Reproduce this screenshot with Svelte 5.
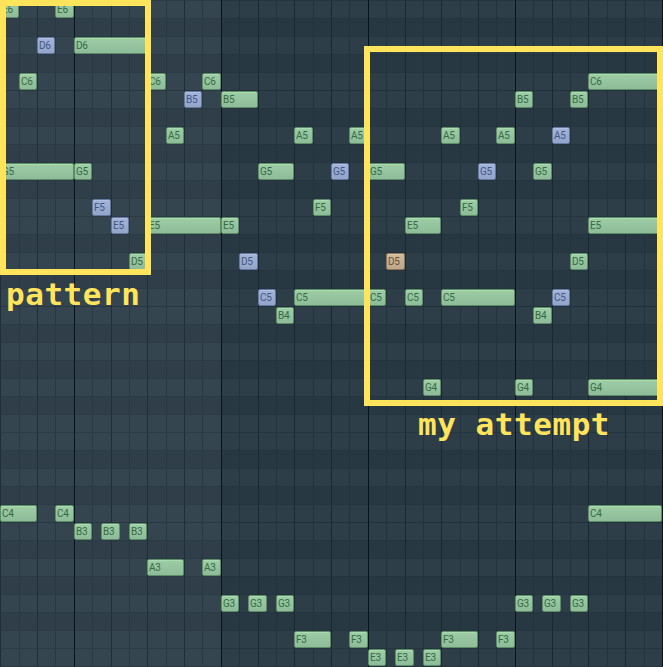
<script>
  const cols = [0, 19, 37, 55, 74, 92, 111, 129, 147, 166, 184, 202, 221, 239, 258, 276, 294, 313, 331, 349, 368, 386, 405, 423, 441, 460, 478, 496, 515, 533, 552, 570, 588, 607, 625, 644, 662, 680];
  const names = ['E', 'D#', 'D', 'C#', 'C', 'B', 'A#', 'A', 'G#', 'G', 'F#', 'F'];
  const rows = Array.from({ length: 38 }, (_, i) => names[i % 12]);
  const steps = cols.slice(0, 37).map((x, i) => ({
    w: cols[i + 1] - x,
    kind: i % 8 === 4 ? 'bar' : i % 2 === 0 ? 'beat' : 'step',
    dim: i >= 12
  }));

  // [label, left, right, colour]
  const data = [
    ['E6', 0, 19], ['E6', 55, 74], ['D6', 37, 55, 'blue'], ['D6', 74, 148],
    ['C6', 19, 37], ['C6', 147, 166], ['C6', 202, 221], ['C6', 588, 662],
    ['B5', 184, 202, 'blue'], ['B5', 221, 258], ['B5', 515, 533], ['B5', 570, 588],
    ['A5', 166, 184], ['A5', 294, 313], ['A5', 349, 368], ['A5', 441, 460], ['A5', 496, 515], ['A5', 552, 570, 'blue'],
    ['G5', 0, 74], ['G5', 74, 92], ['G5', 258, 294], ['G5', 331, 349, 'blue'], ['G5', 368, 405], ['G5', 478, 496, 'blue'], ['G5', 533, 552],
    ['F5', 92, 111, 'blue'], ['F5', 313, 331], ['F5', 460, 478],
    ['E5', 111, 129, 'blue'], ['E5', 147, 221], ['E5', 221, 239], ['E5', 405, 441], ['E5', 588, 662],
    ['D5', 129, 147], ['D5', 239, 258, 'blue'], ['D5', 386, 405, 'tan'], ['D5', 570, 588],
    ['C5', 258, 276, 'blue'], ['C5', 294, 368], ['C5', 368, 386], ['C5', 405, 423], ['C5', 441, 515], ['C5', 552, 570, 'blue'],
    ['B4', 276, 294], ['B4', 533, 552],
    ['G4', 423, 441], ['G4', 515, 533], ['G4', 588, 662],
    ['C4', 0, 37], ['C4', 55, 74], ['C4', 588, 662],
    ['B3', 74, 92], ['B3', 101, 120], ['B3', 129, 147],
    ['A3', 147, 184], ['A3', 202, 221],
    ['G3', 221, 239], ['G3', 248, 267], ['G3', 276, 294], ['G3', 515, 533], ['G3', 542, 561], ['G3', 570, 588],
    ['F3', 294, 331], ['F3', 349, 368], ['F3', 441, 478], ['F3', 496, 515],
    ['E3', 368, 386], ['E3', 395, 414], ['E3', 423, 441]
  ];
  const semis = { C: 0, D: 2, E: 4, F: 5, G: 7, A: 9, B: 11 };
  const notes = data.map(([label, left, right, color = 'green']) => ({
    label, left, color,
    width: right - left,
    top: (76 - (semis[label[0]] + 12 * +label[1])) * 18 + 1
  }));
</script>

<main class="roll">
  <div class="lanes">
    {#each rows as r}
      <div class="lane" class:sharp={r.length > 1} class:octave={r === 'B'}></div>
    {/each}
  </div>
  <div class="steps">
    {#each steps as s}
      <div class="col {s.kind}" class:dim={s.dim} style:width="{s.w}px"></div>
    {/each}
  </div>
  {#each notes as n}
    <div class="note {n.color}" style:left="{n.left}px" style:top="{n.top}px" style:width="{n.width}px">{n.label}</div>
  {/each}
  <div class="frame pattern"></div>
  <div class="frame attempt"></div>
  <div class="caption c1">pattern</div>
  <div class="caption c2">my attempt</div>
</main>

<style>
  :global(body) { margin: 0; background: #34444e; }
  .roll { position: relative; width: 663px; height: 667px; overflow: hidden; }
  .lanes { display: flex; flex-direction: column; }
  .lane { flex: 0 0 18px; box-sizing: border-box; background: #35454f; border-top: 1px solid #2b3a44; }
  .lane.sharp { background: #2f3e48; }
  .lane.octave { border-top-color: #283741; }
  .steps { position: absolute; inset: 0; display: flex; }
  .col { flex: none; box-sizing: border-box; border-left: 1px solid #293842; }
  .beat { border-left-color: #1f2e38; }
  .bar { border-left-color: #07141d; }
  .dim { background: rgba(2, 18, 30, 0.13); background-clip: padding-box; }
  .dim.step { border-left-color: #23323c; }
  .dim.beat { border-left-color: #192832; }
  .note {
    position: absolute;
    box-sizing: border-box;
    height: 17px;
    padding-left: 1px;
    border: 1px solid #5c8d68;
    border-radius: 2px;
    background: linear-gradient(#9dcca5, #8ebc98);
    box-shadow: inset 0 1px #a9dfae;
    color: #336b45;
    font: 10px/16px Roboto, "Liberation Sans", sans-serif;
    letter-spacing: -0.3px;
    white-space: nowrap;
    overflow: hidden;
  }
  .blue { background: linear-gradient(#a2b3d6, #93a5c9); border-color: #6579a0; box-shadow: inset 0 1px #b1c0e4; color: #405889; }
  .tan { background: linear-gradient(#cdb99c, #bda88b); border-color: #8d7555; box-shadow: inset 0 1px #e0c8a5; color: #705033; }
  .frame { position: absolute; box-sizing: border-box; border: 6px solid #ffe45c; }
  .pattern { left: 0; top: 0; width: 151px; height: 275px; }
  .attempt { left: 364px; top: 46px; width: 299px; height: 360px; }
  .caption {
    position: absolute;
    color: #ffe45c;
    font: bold 31px/36px "DejaVu Sans Mono", "Liberation Mono", monospace;
    letter-spacing: 0.54px;
    white-space: pre;
  }
  .c1 { left: 6px; top: 276px; }
  .c2 { left: 418px; top: 406px; }
</style>
